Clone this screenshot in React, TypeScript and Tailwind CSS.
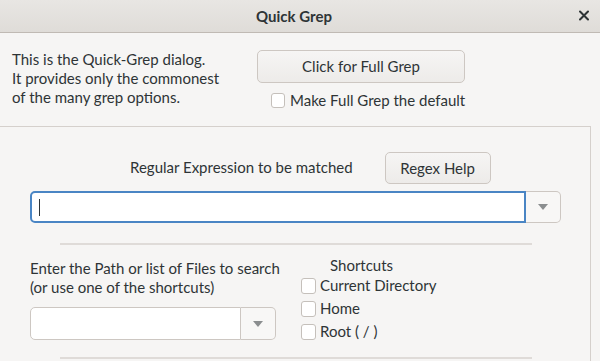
import React from "react";

function Check({ label }: { label: string }) {
  return (
    <div className="flex items-center h-[23px]">
      <div className="w-[15px] h-[16px] rounded-[3px] border border-[#c5c0bb] bg-[#ffffff] shrink-0" />
      <span className="ml-[4px] text-[#2e3436]">{label}</span>
    </div>
  );
}

function Arrow() {
  return (
    <svg width="10" height="6" viewBox="0 0 10 6">
      <path d="M0 0 L10 0 L5 6 Z" fill="#8b8e8f" />
    </svg>
  );
}

export default function App() {
  return (
    <div
      className="w-[600px] h-[361px] overflow-hidden bg-[#f6f5f4] text-[#2e3436] text-[15px] leading-[19px]"
      style={{ fontFamily: "Lato, 'Liberation Sans', sans-serif" }}
    >
      {/* title bar */}
      <div className="h-[33px] flex items-center justify-center relative bg-gradient-to-b from-[#e8e6e3] to-[#dfdcd8] border-b border-[#c0bab4] pr-[12px]">
        <span className="font-bold text-[15px] text-[#2e3436]">Quick Grep</span>
        <svg className="absolute right-[11px] top-[10px]" width="10" height="11" viewBox="0 0 10 11">
          <path d="M1 1.5 L9 9.5 M9 1.5 L1 9.5" stroke="#2e3436" strokeWidth="2" strokeLinecap="round" />
        </svg>
      </div>

      {/* top section */}
      <div className="h-[93px] flex">
        <div className="ml-[12px] mt-[17px] w-[230px]">
          <div>This is the Quick-Grep dialog.</div>
          <div>It provides only the commonest</div>
          <div>of the many grep options.</div>
        </div>
        <div className="ml-[15px] mt-[17px] flex flex-col">
          <div className="w-[208px] h-[33px] rounded-[5px] border border-[#cdc7c2] bg-gradient-to-b from-[#f6f5f4] to-[#edebe9] flex items-center justify-center">
            Click for Full Grep
          </div>
          <div className="flex items-center ml-[14px] mt-[8px]">
            <div className="w-[14px] h-[15px] rounded-[3px] border border-[#c5c0bb] bg-[#ffffff]" />
            <span className="ml-[5px]">Make Full Grep the default</span>
          </div>
        </div>
      </div>

      {/* frame */}
      <div className="w-[591px] h-[240px] border-t border-r border-[#d5d0cc]">
        <div className="flex items-center mt-[25px]">
          <span className="ml-[130px] -mt-[2px]">Regular Expression to be matched</span>
          <div className="ml-[32px] w-[106px] h-[32px] rounded-[5px] border border-[#cdc7c2] bg-gradient-to-b from-[#f6f5f4] to-[#edebe9] flex items-center justify-center">
            Regex Help
          </div>
        </div>
        <div className="flex ml-[30px] mt-[7px] h-[32px] w-[531px]">
          <div className="flex-1 rounded-l-[5px] border-2 border-[#4a85c4] bg-[#ffffff] flex items-center pl-[7px]">
            <div className="w-[1px] h-[17px] bg-[#2e3436]" />
          </div>
          <div className="w-[35px] rounded-r-[5px] border border-l-0 border-[#cdc7c2] bg-[#f8f7f6] flex items-center justify-center">
            <Arrow />
          </div>
        </div>
        <div className="ml-[60px] mt-[20px] w-[472px] h-[2px] bg-[#dfdbd8]" />

        <div className="flex mt-[14px]">
          <div className="ml-[30px] w-[255px]">
            <div>Enter the Path or list of Files to search</div>
            <div>(or use one of the shortcuts)</div>
            <div className="flex mt-[10px] h-[33px] w-[246px]">
              <div className="flex-1 rounded-l-[5px] border border-[#cdc7c2] bg-[#ffffff]" />
              <div className="w-[35px] rounded-r-[5px] border border-l-0 border-[#cdc7c2] bg-[#f8f7f6] flex items-center justify-center">
                <Arrow />
              </div>
            </div>
          </div>
          <div className="ml-[16px] -mt-[3px] flex flex-col">
            <div className="ml-[29px] h-[20px]">Shortcuts</div>
            <div className="-mt-[2px]">
              <Check label="Current Directory" />
              <Check label="Home" />
              <Check label="Root ( / )" />
            </div>
          </div>
        </div>
        <div className="ml-[60px] mt-[14px] w-[472px] h-[2px] bg-[#dfdbd8]" />
      </div>
    </div>
  );
}
